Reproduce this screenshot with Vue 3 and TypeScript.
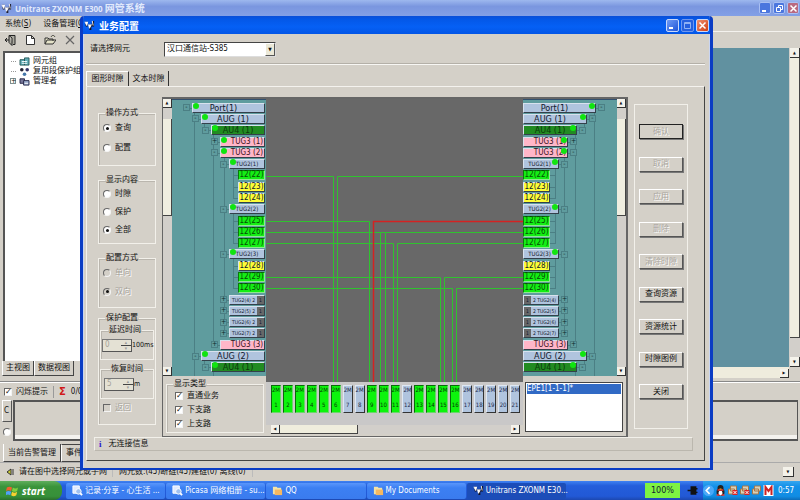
<script setup lang="ts">
import { ref } from 'vue'

type Kind = 'port' | 'aug' | 'au4' | 'tug3' | 'tug2' | 'used' | 'free' | 'small'
interface SlotNode {
  label: string
  kind: Kind
  level: number
  dot?: boolean
  sign?: string
}

const nodes: SlotNode[] = [
  { label: 'Port(1)', kind: 'port', level: 0, dot: true, sign: '-' },
  { label: 'AUG (1)', kind: 'aug', level: 1, dot: true, sign: '-' },
  { label: 'AU4 (1)', kind: 'au4', level: 2, dot: true, sign: '-' },
  { label: 'TUG3 (1)', kind: 'tug3', level: 3, dot: true, sign: '+' },
  { label: 'TUG3 (2)', kind: 'tug3', level: 3, dot: true, sign: '-' },
  { label: 'TUG2(1)', kind: 'tug2', level: 4, dot: true, sign: '-' },
  { label: '12(22)', kind: 'used', level: 5 },
  { label: '12(23)', kind: 'free', level: 5 },
  { label: '12(24)', kind: 'free', level: 5 },
  { label: 'TUG2(2)', kind: 'tug2', level: 4, dot: true, sign: '-' },
  { label: '12(25)', kind: 'used', level: 5 },
  { label: '12(26)', kind: 'used', level: 5 },
  { label: '12(27)', kind: 'used', level: 5 },
  { label: 'TUG2(3)', kind: 'tug2', level: 4, dot: true, sign: '-' },
  { label: '12(28)', kind: 'free', level: 5 },
  { label: '12(29)', kind: 'used', level: 5 },
  { label: '12(30)', kind: 'used', level: 5 },
  { label: 'TUG2(4)', kind: 'small', level: 4, sign: '+' },
  { label: 'TUG2(5)', kind: 'small', level: 4, sign: '+' },
  { label: 'TUG2(6)', kind: 'small', level: 4, sign: '+' },
  { label: 'TUG2(7)', kind: 'small', level: 4, sign: '+' },
  { label: 'TUG3 (3)', kind: 'tug3', level: 3, sign: '+' },
  { label: 'AUG (2)', kind: 'aug', level: 1, dot: true, sign: '-' },
  { label: 'AU4 (1)', kind: 'au4', level: 2, dot: true, sign: '-' },
]

const rowY = (i: number) => Math.round(2 + ((i + 0.5) * 271) / 24)
const lineX = [13, 22, 32, 41, 51, 60]
const branches: [number, number, number][] = [
  [1, rowY(0), 276],
  [2, rowY(1), rowY(2)],
  [3, rowY(2), rowY(21)],
  [4, rowY(4), rowY(20)],
  [5, rowY(5), rowY(8)],
  [5, rowY(9), rowY(12)],
  [5, rowY(13), rowY(16)],
  [2, rowY(22), rowY(23)],
  [3, rowY(23), 276],
]
const treePath =
  branches.map(([l, a, b]) => `M${lineX[l]} ${a}V${b}`).join('') +
  nodes.map((n, i) => `M${lineX[n.level]} ${rowY(i)}h8`).join('')

const greenPath = [
  'M0 76H67V282M71 282V76H257',
  'M0 121H103V282',
  'M0 132H114V282M119 282V132H257M114 132H119',
  'M0 143H127V282M131 282V143H257',
  'M0 177H174V282M178 282V177H257',
  'M0 188H186V282M190 282V188H257',
].join('')

const usedPorts = [1, 2, 3, 4, 5, 6, 9, 10, 11, 13, 14, 15, 16]
const ports = Array.from({ length: 21 }, (_, i) => ({ no: i + 1, used: usedPorts.includes(i + 1) }))

const op = ref('查询')
const show = ref('全部')
const dir = ref('双向')
const flows = ref(['直通业务', '下支路', '上支路'])

const actions = [
  { text: '确认', off: true },
  { text: '取消', off: true },
  { text: '应用', off: true },
  { text: '删除', off: true },
  { text: '清除时隙', off: true },
  { text: '查询资源', off: false },
  { text: '资源统计', off: false },
  { text: '时隙图例', off: false },
  { text: '关闭', off: false },
]

const tasks = [
  { text: '记录·分享 - 心生活 ...', icon: 'doc' },
  { text: 'Picasa 网络相册 - su...', icon: 'doc' },
  { text: 'QQ', icon: 'folder' },
  { text: 'My Documents', icon: 'folder' },
  { text: 'Unitrans ZXONM E30...', icon: 'app' },
]
</script>

<template>
  <div class="desktop">
    <header class="main-title">
      <svg class="app-icon" viewBox="0 0 12 12"><path d="M1 2h3v5H2zM5 5h3v6H6zM9 1h2v6H8z" fill="#223" /><path d="M1 2l2 4 1-4M5 5l1 4 2-4M9 1l1 5" fill="#fff" stroke="#fff" /></svg>
      <h1>Unitrans ZXONM E300 <span>网管系统</span></h1>
      <div class="win-buttons faded">
        <button aria-label="最小化"><svg viewBox="0 0 11 11"><path d="M2 8h4" stroke="#fff" stroke-width="2" /></svg></button>
        <button aria-label="还原"><svg viewBox="0 0 11 11"><path d="M4.500 4V2.500h4v4H7M2.500 4.500h4v4h-4z" fill="none" stroke="#fff" /></svg></button>
        <button class="close" aria-label="关闭"><svg viewBox="0 0 11 11"><path d="M2.500 2.500l6 6m0-6l-6 6" stroke="#fff" stroke-width="1.500" /></svg></button>
      </div>
    </header>
    <nav class="menu">
      <button>系统(<u>S</u>)</button>
      <button>设备管理(<u>C</u>)</button>
    </nav>
    <div class="toolbar">
      <button aria-label="退出"><svg viewBox="0 0 12 12"><path d="M5 1.500h6v9H9M5 1.500v7l3 3V4zM1 6h4M3 4L1 6l2 2" fill="#aaa99f" stroke="#222" /></svg></button>
      <button aria-label="新建"><svg viewBox="0 0 12 12"><path d="M2.500 1.500h5l3 3v6h-8zM7.500 1.500v3h3" fill="#fff" stroke="#333" /></svg></button>
      <button aria-label="打开"><svg viewBox="0 0 12 12"><path d="M1 10V4h3l1 1h4v2M1 10l2-4h9l-3 4zM7 3c1-2 3-2 4 0" fill="#e4e2c8" stroke="#333" /></svg></button>
      <button aria-label="删除"><svg viewBox="0 0 12 12"><path d="M2 2l8 8M10 2l-8 8" stroke="#666" stroke-width="1.200" /></svg></button>
    </div>

    <div class="work">
      <section class="nav-tree">
        <ul>
          <li><span class="twig"></span><svg viewBox="0 0 12 10"><path d="M1 3h5v6H1zM6 1h5v8H6z" fill="#62aeb8" stroke="#255" /><path d="M3 5h6M3 7h6" stroke="#fff" /></svg>网元组</li>
          <li><span class="twig"></span><svg viewBox="0 0 12 10"><circle cx="3" cy="3" r="2" fill="#223" /><circle cx="9" cy="3" r="2" fill="#336" /><circle cx="6" cy="8" r="2" fill="#47a" /></svg>复用段保护组</li>
          <li><button class="twist" aria-label="展开">+</button><svg viewBox="0 0 12 10"><path d="M1 2h5v5H1z" fill="#779" stroke="#224" /><path d="M5 4h6v5H5z" fill="#9ac" stroke="#224" /><path d="M6 7h4" stroke="#fff" /></svg>管理者</li>
        </ul>
      </section>
      <section class="topology"></section>
      <div class="vbar tall"><button aria-label="向上">▲</button><i></i><button aria-label="向下">▼</button></div>
    </div>
    <div class="below">
      <div class="flat-tabs views">
        <button class="on">主视图</button><button>数据视图</button>
      </div>
      <div class="h-end"><button aria-label="向右">▶</button></div>
    </div>
    <div class="alarm-bar">
      <label><input type="checkbox" checked />闪烁提示</label>
      <i></i><b>Σ</b><span>0/0</span>
    </div>
    <div class="alarm">
      <div class="alarm-side"><button>C</button><input type="radio" aria-label="告警" /></div>
      <div class="alarm-list"></div>
    </div>
    <div class="flat-tabs low">
      <button class="on">当前告警管理</button><button>事件</button>
    </div>
    <footer class="status">
      <svg viewBox="0 0 8 8"><path d="M1 4l4-3v6z" fill="#cc3" stroke="#333" /><path d="M7 1v6" stroke="#333" /></svg>
      <span class="hint">请在图中选择网元或子网</span>
      <span class="count">网元数:(45)断链(45)建链(0) 离线(0)</span>
      <button aria-label="更多">▼</button>
    </footer>

    <div class="taskbar">
      <button class="start">
        <svg viewBox="0 0 14 14"><path d="M1 3q3-2 6 0l-1 4Q3 5 0 7z" fill="#f06030" /><path d="M8 3q3 2 6 0l-1 4q-3 2-6 0z" fill="#80d040" /><path d="M0 8q3-2 6 0l-1 4q-3-2-5 0z" fill="#50a0f8" /><path d="M7 8q3 2 6 0l-1 4q-3 2-6 0z" fill="#f8d030" /></svg>
        start
      </button>
      <div class="tasks">
        <button v-for="t in tasks" :key="t.text" :class="{ pressed: t.icon === 'app' }">
          <svg v-if="t.icon === 'doc'" viewBox="0 0 12 12"><path d="M1 1h7v8H1z" fill="#dfe9ff" stroke="#fff" /><circle cx="7" cy="7" r="3" fill="#9fc0f0" stroke="#fff" /><path d="M9 9l2 2" stroke="#fff" stroke-width="2" /></svg>
          <svg v-else-if="t.icon === 'folder'" viewBox="0 0 12 12"><path d="M1 2h4l1 1h4v7H1z" fill="#f2e2a8" /><path d="M3 5h8v6H3z" fill="#f5b860" /></svg>
          <svg v-else viewBox="0 0 12 12"><path d="M1 2h3v5H2zM5 5h3v6H6zM9 1h2v6H8z" fill="#112" /><path d="M1 2l2 4 1-4M5 5l1 4 2-4M9 1l1 5" fill="#fff" stroke="#fff" /></svg>
          <span>{{ t.text }}</span>
        </button>
      </div>
      <span class="battery">100%</span>
      <svg class="plug" viewBox="0 0 12 10"><path d="M4 1h5v8H4zM9 3h2M9 7h2M0 5h4" fill="#111" stroke="#111" stroke-width="1.500" /></svg>
      <div class="tray">
        <button class="chev" aria-label="显示隐藏的图标"><svg viewBox="0 0 10 10"><circle cx="5" cy="5" r="5" fill="#4aa8f8" /><path d="M6 2L3 5l3 3" fill="none" stroke="#fff" stroke-width="1.500" /></svg></button>
        <svg viewBox="0 0 10 11"><ellipse cx="5" cy="7" rx="4" ry="4" fill="#222" /><ellipse cx="5" cy="8" rx="2" ry="2.500" fill="#fff" /><circle cx="5" cy="3" r="3" fill="#222" /><path d="M2 5h6M1 10h3M6 10h3" stroke="#e33" stroke-width="1.500" /><path d="M4 4h2" stroke="#fb0" /></svg>
        <svg v-for="n in 2" :key="n" viewBox="0 0 10 11"><path d="M3 1h6v5H3zM1 4h6v5H1z" fill="#d8d0b8" stroke="#a87848" /><path d="M5 5h5v5H5z" fill="#d22" /><path d="M6 6l3 3M9 6L6 9" stroke="#fff" /></svg>
        <svg viewBox="0 0 10 11"><path d="M3 1h6v5H3zM1 4h6v5H1z" fill="#d8d0b8" stroke="#a87848" /></svg>
        <svg viewBox="0 0 10 11"><path d="M0 0h10v11H0z" fill="#fff" /><path d="M2 10V2l3 4 3-4v8" fill="none" stroke="#c22" stroke-width="2" /></svg>
        <time>0:57</time>
      </div>
    </div>

    <div class="dialog" role="dialog" aria-label="业务配置">
      <header class="dlg-title">
        <svg class="app-icon" viewBox="0 0 12 12"><path d="M1 2h3v5H2zM5 5h3v6H6zM9 1h2v6H8z" fill="#112" /><path d="M1 2l2 4 1-4M5 5l1 4 2-4M9 1l1 5" fill="#fff" stroke="#fff" /></svg>
        <h2>业务配置</h2>
        <div class="win-buttons">
          <button aria-label="最小化"><svg viewBox="0 0 11 11"><path d="M2 8h4" stroke="#fff" stroke-width="2" /></svg></button>
          <button class="dim" aria-label="最大化"><svg viewBox="0 0 11 11"><path d="M2.500 2.500h6v6h-6zM2 3.500h7" fill="none" stroke="#8fb2f5" /></svg></button>
          <button class="close" aria-label="关闭"><svg viewBox="0 0 11 11"><path d="M2.500 2.500l6 6m0-6l-6 6" stroke="#fff" stroke-width="1.500" /></svg></button>
        </div>
      </header>
      <div class="dlg-body">
        <div class="pick">
          <label for="ne">请选择网元</label>
          <div class="combo"><select id="ne"><option>汉口通信站-S385</option></select><span>▼</span></div>
        </div>
        <div class="tabs">
          <button class="on">图形时隙</button><button>文本时隙</button>
        </div>
        <div class="panel">
          <div class="columns">
            <div class="options">
              <fieldset class="g1">
                <legend>操作方式</legend>
                <label v-for="o in ['查询', '配置']" :key="o"><input v-model="op" type="radio" name="op" :value="o" />{{ o }}</label>
              </fieldset>
              <fieldset class="g2">
                <legend>显示内容</legend>
                <label v-for="o in ['时隙', '保护', '全部']" :key="o"><input v-model="show" type="radio" name="show" :value="o" />{{ o }}</label>
              </fieldset>
              <fieldset class="g3" disabled>
                <legend>配置方式</legend>
                <label v-for="o in ['单向', '双向']" :key="o"><input v-model="dir" type="radio" name="dir" :value="o" />{{ o }}</label>
              </fieldset>
              <fieldset class="g4">
                <legend>保护配置</legend>
                <fieldset disabled>
                  <legend>延迟时间</legend>
                  <div class="spin"><input id="delay" type="text" value="0" /><span><i>▴</i><i>▾</i></span></div>
                  <label for="delay">100ms</label>
                </fieldset>
                <fieldset disabled class="restore">
                  <legend>恢复时间</legend>
                  <div class="spin"><input id="restore" type="text" value="5" /><span><i>▴</i><i>▾</i></span></div>
                  <label for="restore">m</label>
                </fieldset>
                <label class="off"><input type="checkbox" disabled />返回</label>
              </fieldset>
            </div>

            <div class="matrix">
              <div class="side left">
                <div class="tree-wrap">
                  <div class="vbar"><button aria-label="向上">▲</button><i></i><button aria-label="向下">▼</button></div>
                  <div class="tree">
                    <svg class="lines" viewBox="0 0 92 276" preserveAspectRatio="none"><path :d="treePath" /></svg>
                    <div v-for="(n, i) in nodes" :key="i" class="row">
                      <button v-if="n.sign" class="twist">{{ n.sign }}</button>
                      <span class="node" :class="[n.kind, 'l' + n.level]"><i v-if="n.dot" class="dot"></i>{{ n.label }}<template v-if="n.kind === 'small'"> 2 <em>1</em></template></span>
                    </div>
                  </div>
                </div>
                <fieldset class="flows">
                  <legend>显示类型</legend>
                  <label v-for="f in ['直通业务', '下支路', '上支路']" :key="f"><input v-model="flows" type="checkbox" :value="f" />{{ f }}</label>
                </fieldset>
              </div>

              <div class="middle">
                <svg class="routes" viewBox="0 -1 257 283" preserveAspectRatio="none">
                  <g transform="translate(0.5 0.5)">
                    <path :d="greenPath" stroke="#2fc32f" />
                    <path class="alert" d="M107 282V121H257" stroke="#d42222" />
                  </g>
                </svg>
                <div class="ports">
                  <div v-for="p in ports" :key="p.no" class="port-cell" :class="{ on: p.used }"><span>2M</span><span>{{ p.no }}</span></div>
                </div>
                <div class="hbar"><button aria-label="向左">◀</button><i></i><button aria-label="向右">▶</button></div>
              </div>

              <div class="side right">
                <div class="tree-wrap">
                  <div class="tree">
                    <svg class="lines" viewBox="0 0 92 276" preserveAspectRatio="none"><path :d="treePath" transform="translate(92 0) scale(-1 1)" /></svg>
                    <div v-for="(n, i) in nodes" :key="i" class="row">
                      <span class="node" :class="[n.kind, 'l' + n.level]"><template v-if="n.kind === 'small'"><em>1</em> 2 </template>{{ n.label }}<i v-if="n.dot" class="dot"></i></span>
                      <button v-if="n.sign" class="twist">{{ n.sign }}</button>
                    </div>
                  </div>
                  <div class="vbar"><button aria-label="向上">▲</button><i></i><button aria-label="向下">▼</button></div>
                </div>
                <ul class="boards"><li>EPE1[1-1-1]*</li></ul>
              </div>
            </div>

            <div class="actions">
              <button v-for="(a, i) in actions" :key="a.text" :disabled="a.off" :class="{ default: i === 0 }">{{ a.text }}</button>
            </div>
          </div>
          <p class="info"><b>i</b>无连接信息</p>
        </div>
      </div>
    </div>
  </div>
</template>

<style>
body {
  margin: 0;
  background: #d4d0c8;
}
</style>

<style scoped>
* {
  box-sizing: border-box;
}
.desktop {
  position: relative;
  display: flex;
  flex-direction: column;
  height: 100vh;
  overflow: hidden;
  background: #d4d0c8;
  color: #111;
  font: 8px/10px 'DejaVu Sans Condensed', 'Noto Sans CJK SC', sans-serif;
}
button,
input,
select {
  margin: 0;
  padding: 0;
  font: inherit;
  color: inherit;
  border: 0;
  border-radius: 0;
  background: none;
}
ul,
h1,
h2,
p {
  margin: 0;
  padding: 0;
  list-style: none;
  font-weight: normal;
}
svg {
  display: block;
  flex: none;
}
i,
em {
  font-style: normal;
}

/* main window */
.main-title {
  display: flex;
  align-items: center;
  gap: 3px;
  height: 16px;
  flex: none;
  padding: 0 1px;
  background: linear-gradient(#9db8ee, #7a96df 40%, #83a0e6);
  color: #e2eafc;
}
.app-icon {
  width: 11px;
  height: 11px;
}
h1 {
  flex: 1;
  font: bold 8px/14px 'Open Sans', 'Noto Sans CJK SC', sans-serif;
}
h1 span {
  font-size: 10px;
}
.win-buttons {
  display: flex;
  gap: 2px;
}
.win-buttons button {
  width: 13px;
  height: 13px;
  border: 1px solid #c8d8fa;
  border-radius: 2px;
  background: linear-gradient(135deg, #6f9bf5, #1f55d8);
}
.win-buttons .dim {
  border-color: #6f97ef;
  background: #2560df;
}
.win-buttons .close {
  background: linear-gradient(135deg, #f09070, #cf3f14);
}
.win-buttons svg {
  width: 11px;
  height: 11px;
}
.faded button {
  width: 12px;
  height: 12px;
  border-color: #a9bff2;
  background: #4b76de;
}
.faded .close {
  background: #b96a80;
}
.menu {
  display: flex;
  gap: 12px;
  height: 16px;
  flex: none;
  padding: 0 5px;
  border-bottom: 1px solid #f4f2ee;
}
.toolbar {
  display: flex;
  align-items: center;
  gap: 8px;
  height: 16px;
  flex: none;
  padding: 0 4px;
}
.toolbar svg {
  width: 12px;
  height: 12px;
}
.work {
  flex: 1;
  display: flex;
  min-height: 0;
  padding-left: 3px;
}
.nav-tree {
  width: 130px;
  margin-top: 3px;
  padding: 3px 6px;
  background: #fff;
  border: 1px solid #555;
  border-width: 2px 0 0 2px;
}
.nav-tree li {
  display: flex;
  align-items: center;
  gap: 3px;
  height: 10px;
  white-space: nowrap;
}
.nav-tree svg {
  width: 11px;
  height: 9px;
}
.twig {
  width: 5px;
  border-top: 1px dotted #999;
}
.twist {
  display: grid;
  place-items: center;
  flex: none;
  width: 7px;
  height: 7px;
  border: 1px solid #7f8f90;
  font-size: 7px;
  line-height: 5px;
}
.nav-tree li .twist {
  width: 6px;
  margin-left: -1px;
  height: 6px;
}
.topology {
  flex: 1;
  background: #6191a0;
}
.vbar {
  display: flex;
  flex-direction: column;
  width: 9px;
  flex: none;
  background: #d2cfca;
}
.vbar button,
.hbar button,
.h-end button,
.status button {
  width: 9px;
  height: 9px;
  flex: none;
  background: #f4f2ea;
  border-right: 1px solid #333;
  border-bottom: 1px solid #333;
  font-size: 4px;
  line-height: 8px;
}
.vbar i {
  height: 97px;
  margin: 11px 0 auto;
  background: #f0eee0;
  border-right: 1px solid #444;
  border-bottom: 1px solid #444;
}
.tall {
  width: 11px;
  padding-left: 1px;
}
.tall button {
  width: 10px;
  height: 10px;
}
.tall i {
  height: 280px;
  margin-top: 0;
}
.below {
  display: flex;
  height: 21px;
  flex: none;
  padding: 0 11px 0 2px;
  margin-top: -6px;
  border-bottom: 1px solid #888;
}
.flat-tabs {
  display: flex;
  height: 15px;
}
.flat-tabs button {
  padding: 0 3px;
  border-right: 1px solid #444;
  border-bottom: 1px solid #444;
  border-left: 1px solid #fff;
}
.views {
  width: 131px;
  background: #d4d0c8;
}
.h-end {
  flex: 1;
  height: 11px;
  margin-top: 6px;
  text-align: right;
  background: #efecdd;
}
.alarm-bar {
  display: flex;
  align-items: center;
  gap: 5px;
  height: 18px;
  flex: none;
  padding: 0 4px;
  border-top: 1px solid #fff;
}
.alarm-bar label {
  display: flex;
  align-items: center;
  gap: 4px;
}
.alarm-bar > i {
  height: 12px;
  border-left: 1px solid #999;
}
.alarm-bar b {
  color: #d01818;
  font: bold 10px/10px 'DejaVu Sans', sans-serif;
}
.alarm {
  display: flex;
  height: 41px;
  flex: none;
  padding-right: 2px;
}
.alarm-side {
  display: flex;
  flex-direction: column;
  gap: 6px;
  align-items: center;
  width: 13px;
}
.alarm-side button {
  width: 10px;
  height: 22px;
  border: 1px solid #555;
  border-color: #fff #555 #555 #fff;
}
.alarm-list {
  flex: 1;
  border: 2px solid #555;
  border-right-width: 1px;
  box-shadow: inset -1px -5px 0 -1px #f4f2ee;
}
.low {
  flex: none;
  margin: 3px 0 0 3px;
  height: 18px;
}
.low button {
  padding: 0 4px;
  border-top: 1px solid #444;
}
.low .on {
  border-top: 0;
}
.status {
  display: flex;
  align-items: center;
  gap: 5px;
  height: 19px;
  flex: none;
  padding: 0 6px;
  border-top: 1px solid #aaa;
}
.status svg {
  width: 8px;
  height: 8px;
}
.status .count {
  padding: 0 6px;
  border: 1px solid #bbb;
  border-width: 0 1px;
}
.status button {
  width: 11px;
  height: 10px;
  margin-left: auto;
}

/* taskbar */
.taskbar {
  display: flex;
  align-items: center;
  height: 19px;
  flex: none;
  background: linear-gradient(#3f82f2, #245edb 25%, #2259d6 80%, #1c48b0);
  color: #fff;
}
.start {
  display: flex;
  align-items: center;
  gap: 4px;
  width: 62px;
  height: 19px;
  padding-left: 6px;
  border-radius: 0 8px 8px 0;
  background: linear-gradient(#5fae5c, #3a933a 30%, #37903a 80%, #2a6f2c);
  font: italic bold 10px/18px 'Open Sans', sans-serif;
}
.start svg {
  width: 12px;
  height: 12px;
}
.tasks {
  flex: 1;
  display: flex;
  gap: 1px;
  min-width: 0;
  margin: 0 75px 0 4px;
}
.tasks button {
  flex: 1;
  display: flex;
  align-items: center;
  gap: 2px;
  min-width: 0;
  height: 16px;
  padding-left: 6px;
  border-radius: 2px;
  background: linear-gradient(#5a96fb, #3c80f3 30%, #3a7bee);
  white-space: nowrap;
}
.tasks .pressed {
  background: #1c4db8;
}
.tasks svg {
  width: 11px;
  height: 11px;
}
.battery {
  width: 35px;
  height: 15px;
  margin-left: 4px;
  background: #7ef342;
  color: #123;
  line-height: 15px;
  text-align: center;
  font-size: 9px;
}
.plug {
  width: 12px;
  height: 9px;
  margin: 0 4px 0 7px;
}
.tray {
  display: flex;
  align-items: center;
  gap: 1px;
  width: 97px;
  height: 19px;
  background: linear-gradient(#35a6f0, #1290e8 30%, #118de4 80%, #0d6cb8);
}
.tray svg {
  width: 11px;
  height: 11px;
}
.tray time {
  margin-left: 3px;
}

/* dialog window, floats over the main window */
.dialog {
  position: absolute;
  inset: 16px 87px 30px 80px;
  display: flex;
  flex-direction: column;
  border: solid #0a3cc4;
  border-width: 0 3px 2px;
  border-radius: 4px 4px 0 0;
  background: #d4d0c8;
  overflow: hidden;
}
.dlg-title {
  display: flex;
  align-items: center;
  gap: 4px;
  height: 18px;
  flex: none;
  margin: 0 -3px;
  padding: 1px 4px 0 4px;
  background: linear-gradient(#0a4fd8, #0458e8 20%, #0560f5 60%, #0355e6);
  color: #fff;
}
h2 {
  flex: 1;
  font: bold 10px/16px 'Noto Sans CJK SC', sans-serif;
}
.dlg-body {
  flex: 1;
  display: flex;
  flex-direction: column;
  min-height: 0;
  padding: 0 4px 7px 2px;
  border: 1px solid #c9d5f2;
  border-width: 0 1px;
}
.pick {
  display: flex;
  align-items: center;
  gap: 34px;
  height: 31px;
  flex: none;
  padding: 0 4px;
  border-bottom: 1px solid #f8f7f4;
  box-shadow: inset 0 -1px 0 #b4b0a8;
}
.combo {
  display: flex;
  width: 112px;
  height: 15px;
  background: #fff;
  border: 1px solid #555;
  border-color: #444 #ddd #ddd #444;
}
select {
  flex: 1;
  appearance: none;
  padding: 0 2px;
  outline: 0;
}
.combo span {
  width: 10px;
  background: #ece9d8;
  border: 1px solid #666;
  border-color: #fff #555 #555 #fff;
  font-size: 5px;
  line-height: 11px;
  text-align: center;
}
.tabs {
  display: flex;
  flex: none;
  height: 15px;
  margin-top: 6px;
}
.tabs button {
  width: 40px;
  border: 1px solid #333;
  border-width: 0 1px 0 0;
}
.tabs .on {
  width: 43px;
  border-left: 1px solid #fff;
  border-top: 1px solid #fff;
}
.panel {
  flex: 1;
  display: flex;
  flex-direction: column;
  min-height: 0;
  padding: 10px 11px 9px 7px;
  border: 1px solid #444;
  border-color: #f4f2ee #444 #444 #f4f2ee;
}
.columns {
  flex: 1;
  display: flex;
  min-height: 0;
}
fieldset {
  min-width: 0;
  margin: 0;
  padding: 0;
  border: 1px solid #f2f0ea;
  box-shadow: inset 1px 1px 0 #bab6ae;
}
legend {
  margin-left: 6px;
  padding: 0 1px;
  white-space: nowrap;
}
label {
  white-space: nowrap;
}
.options {
  width: 62px;
  padding: 11px 0 0 4px;
}
.options > fieldset > label {
  display: flex;
  align-items: center;
  gap: 4px;
  padding-left: 4px;
}
.g1 {
  height: 58px;
}
.g1 > label {
  height: 20px;
}
.g2 {
  height: 69px;
  margin-top: 9px;
}
.g2 > label {
  height: 18px;
}
.g3 {
  height: 55px;
  margin-top: 9px;
}
.g3 > label {
  height: 19px;
}
.g4 {
  height: 112px;
  margin-top: 5px;
  padding-top: 2px;
}
.g4 fieldset {
  display: flex;
  align-items: center;
  height: 35px;
  margin: 0 1px 4px;
  padding: 0 0 4px 1px;
}
.g4 .restore {
  padding-left: 3px;
}
.g4 fieldset label {
  font-size: 7px;
}
.g3 label,
.off {
  color: #a5a198;
  text-shadow: 1px 1px 0 #fff;
}
input[type='radio'],
input[type='checkbox'] {
  appearance: none;
  display: grid;
  place-items: center;
  flex: none;
  width: 8px;
  height: 8px;
  border: 1px solid #777;
  border-color: #666 #f4f4f4 #f4f4f4 #666;
  background: #fff;
}
input[type='radio'] {
  border-radius: 50%;
}
input:disabled {
  background: #d4d0c8;
}
input[type='radio']:checked::before {
  content: '';
  width: 3px;
  height: 3px;
  border-radius: 50%;
  background: #111;
}
input[type='checkbox']:checked::before {
  content: '✓';
  font: bold 8px/6px 'DejaVu Sans', sans-serif;
}
.spin {
  display: flex;
  width: 30px;
  height: 13px;
  border: 1px solid #555;
  border-color: #777 #555 #555 #777;
  background: #e4e1d4;
}
.spin input {
  flex: 1;
  min-width: 0;
  padding-left: 2px;
  color: #a5a198;
  background: #e4e1d4;
}
.spin span {
  width: 10px;
}
.spin i {
  display: block;
  height: 6px;
  border-bottom: 1px solid #444;
  font-size: 5px;
  line-height: 5px;
  text-align: center;
  color: #999;
}
.spin i + i {
  height: 5px;
  border-bottom: 0;
}

/* slot matrix */
.matrix {
  flex: 1;
  display: flex;
  min-width: 0;
  margin: 0 6px;
  border: 1px solid #666;
  border-width: 2px 2px 1px 1px;
}
.side {
  display: flex;
  flex-direction: column;
  width: 103px;
  flex: none;
}
.tree-wrap {
  flex: 1;
  display: flex;
  min-height: 0;
}
.tree {
  flex: 1;
  position: relative;
  display: grid;
  grid-template-rows: repeat(24, minmax(0, 1fr));
  padding: 2px 1px 3px 0;
  border-top: 1px solid #33506e;
  background: #5f9c9e;
}
.lines {
  position: absolute;
  inset: 0;
  width: 100%;
  height: 100%;
}
.lines path {
  fill: none;
  stroke: #4b7f84;
  shape-rendering: crispEdges;
}
.row {
  position: relative;
  display: flex;
  align-items: center;
  gap: 2px;
}
.left .row {
  justify-content: flex-end;
}
.node {
  position: relative;
  display: block;
  height: 10px;
  border: 1px solid #444;
  border-color: #d8e2ee #33404a #33404a #d8e2ee;
  background: #b0c4de;
  color: #10182c;
  line-height: 8px;
  text-align: center;
  white-space: nowrap;
}
.l0 {
  width: 73px;
}
.l1 {
  width: 64px;
}
.l2 {
  width: 54px;
}
.l3 {
  width: 45px;
}
.l4 {
  width: 36px;
}
.l5 {
  width: 27px;
}
.port,
.aug,
.au4 {
  font-size: 9px;
}
.port,
.right .aug {
  padding-right: 10px;
}
.au4 {
  background: #228b22;
  color: #0a3a0a;
}
.tug3 {
  padding-left: 9px;
  background: #ffb6c8;
  color: #3a1020;
}
.tug2 {
  font-size: 6px;
}
.right .tug2 {
  padding-right: 3px;
}
.used {
  background: #14ee14;
  border-color: #0a7a0a #8fe88f #8fe88f #0a7a0a;
  color: #064a06;
}
.free {
  background: #fdfd38;
}
.small {
  display: flex;
  justify-content: space-between;
  white-space: pre;
  font-size: 5px;
}
.left .small {
  padding-left: 2px;
}
.right .small {
  padding-right: 2px;
}
.small em {
  width: 7px;
  background: #686868;
}
.dot {
  position: absolute;
  top: -1px;
  left: 0;
  width: 6px;
  height: 6px;
  border-radius: 50%;
  background: #10e410;
}
.right .dot {
  left: auto;
  right: 0;
}
.row .twist {
  background: #5f9c9e;
  border-color: #4b7f84;
  color: #0d2a2c;
}
.flows {
  height: 54px;
  margin: 3px 2px 3px 3px;
}
.flows label {
  display: flex;
  align-items: center;
  gap: 4px;
  height: 14px;
  padding-left: 8px;
}
.middle {
  flex: 1;
  display: flex;
  flex-direction: column;
  min-width: 0;
}
.routes {
  flex: 1;
  min-height: 0;
  width: 100%;
  background: #686868;
}
.routes path {
  fill: none;
  vector-effect: non-scaling-stroke;
}
.routes .alert {
  stroke-width: 1.5;
}
.ports {
  display: flex;
  gap: 2px;
  height: 43px;
  padding: 3px 3px 12px 5px;
  background: #c9c8c8;
}
.port-cell {
  flex: 1;
  display: flex;
  flex-direction: column;
  align-items: center;
  justify-content: space-between;
  min-width: 0;
  padding-bottom: 4px;
  border: 1px solid #555;
  border-color: #dfe8f4 #333 #333 #dfe8f4;
  background: #b0c4de;
  color: #1c2a4a;
  font-size: 6px;
  line-height: 7px;
}
.port-cell.on {
  background: #0cf40c;
  border-color: #0a6a0a #6ad86a #6ad86a #0a6a0a;
  color: #043a04;
}
.hbar {
  display: flex;
  margin: 0 3px 2px 5px;
  background: #d2cfca;
}
.hbar i {
  width: 78px;
  margin-right: auto;
  background: #efeddd;
  border-right: 1px solid #444;
  border-bottom: 1px solid #444;
}
.boards {
  height: 50px;
  margin: 6px 3px 4px 2px;
  padding: 1px;
  border: 1px solid #444;
  background: #fff;
}
.boards li {
  background: #316ac5;
  color: #fff;
}
.actions {
  display: flex;
  flex-direction: column;
  justify-content: space-between;
  width: 54px;
  margin: 7px 5px 8px 0;
  padding: 19px 4px 29px;
  border: 1px solid #f2f0ea;
}
.actions button {
  height: 15px;
  border: 1px solid #444;
  border-color: #fff #555 #555 #fff;
  box-shadow: 1px 1px 0 #777;
}
.actions .default {
  border: 1px solid #222;
}
.actions button:disabled {
  color: #aaa69e;
  text-shadow: 1px 1px 0 #fff;
}
.info {
  display: flex;
  gap: 7px;
  height: 14px;
  flex: none;
  padding: 0 4px;
  border: 1px solid #bbb7ae;
  border-color: #f2f0ea #bbb7ae #bbb7ae #f2f0ea;
  line-height: 12px;
}
.info b {
  color: #2a1ad0;
  font: bold 9px/12px 'Liberation Serif', serif;
}
</style>
